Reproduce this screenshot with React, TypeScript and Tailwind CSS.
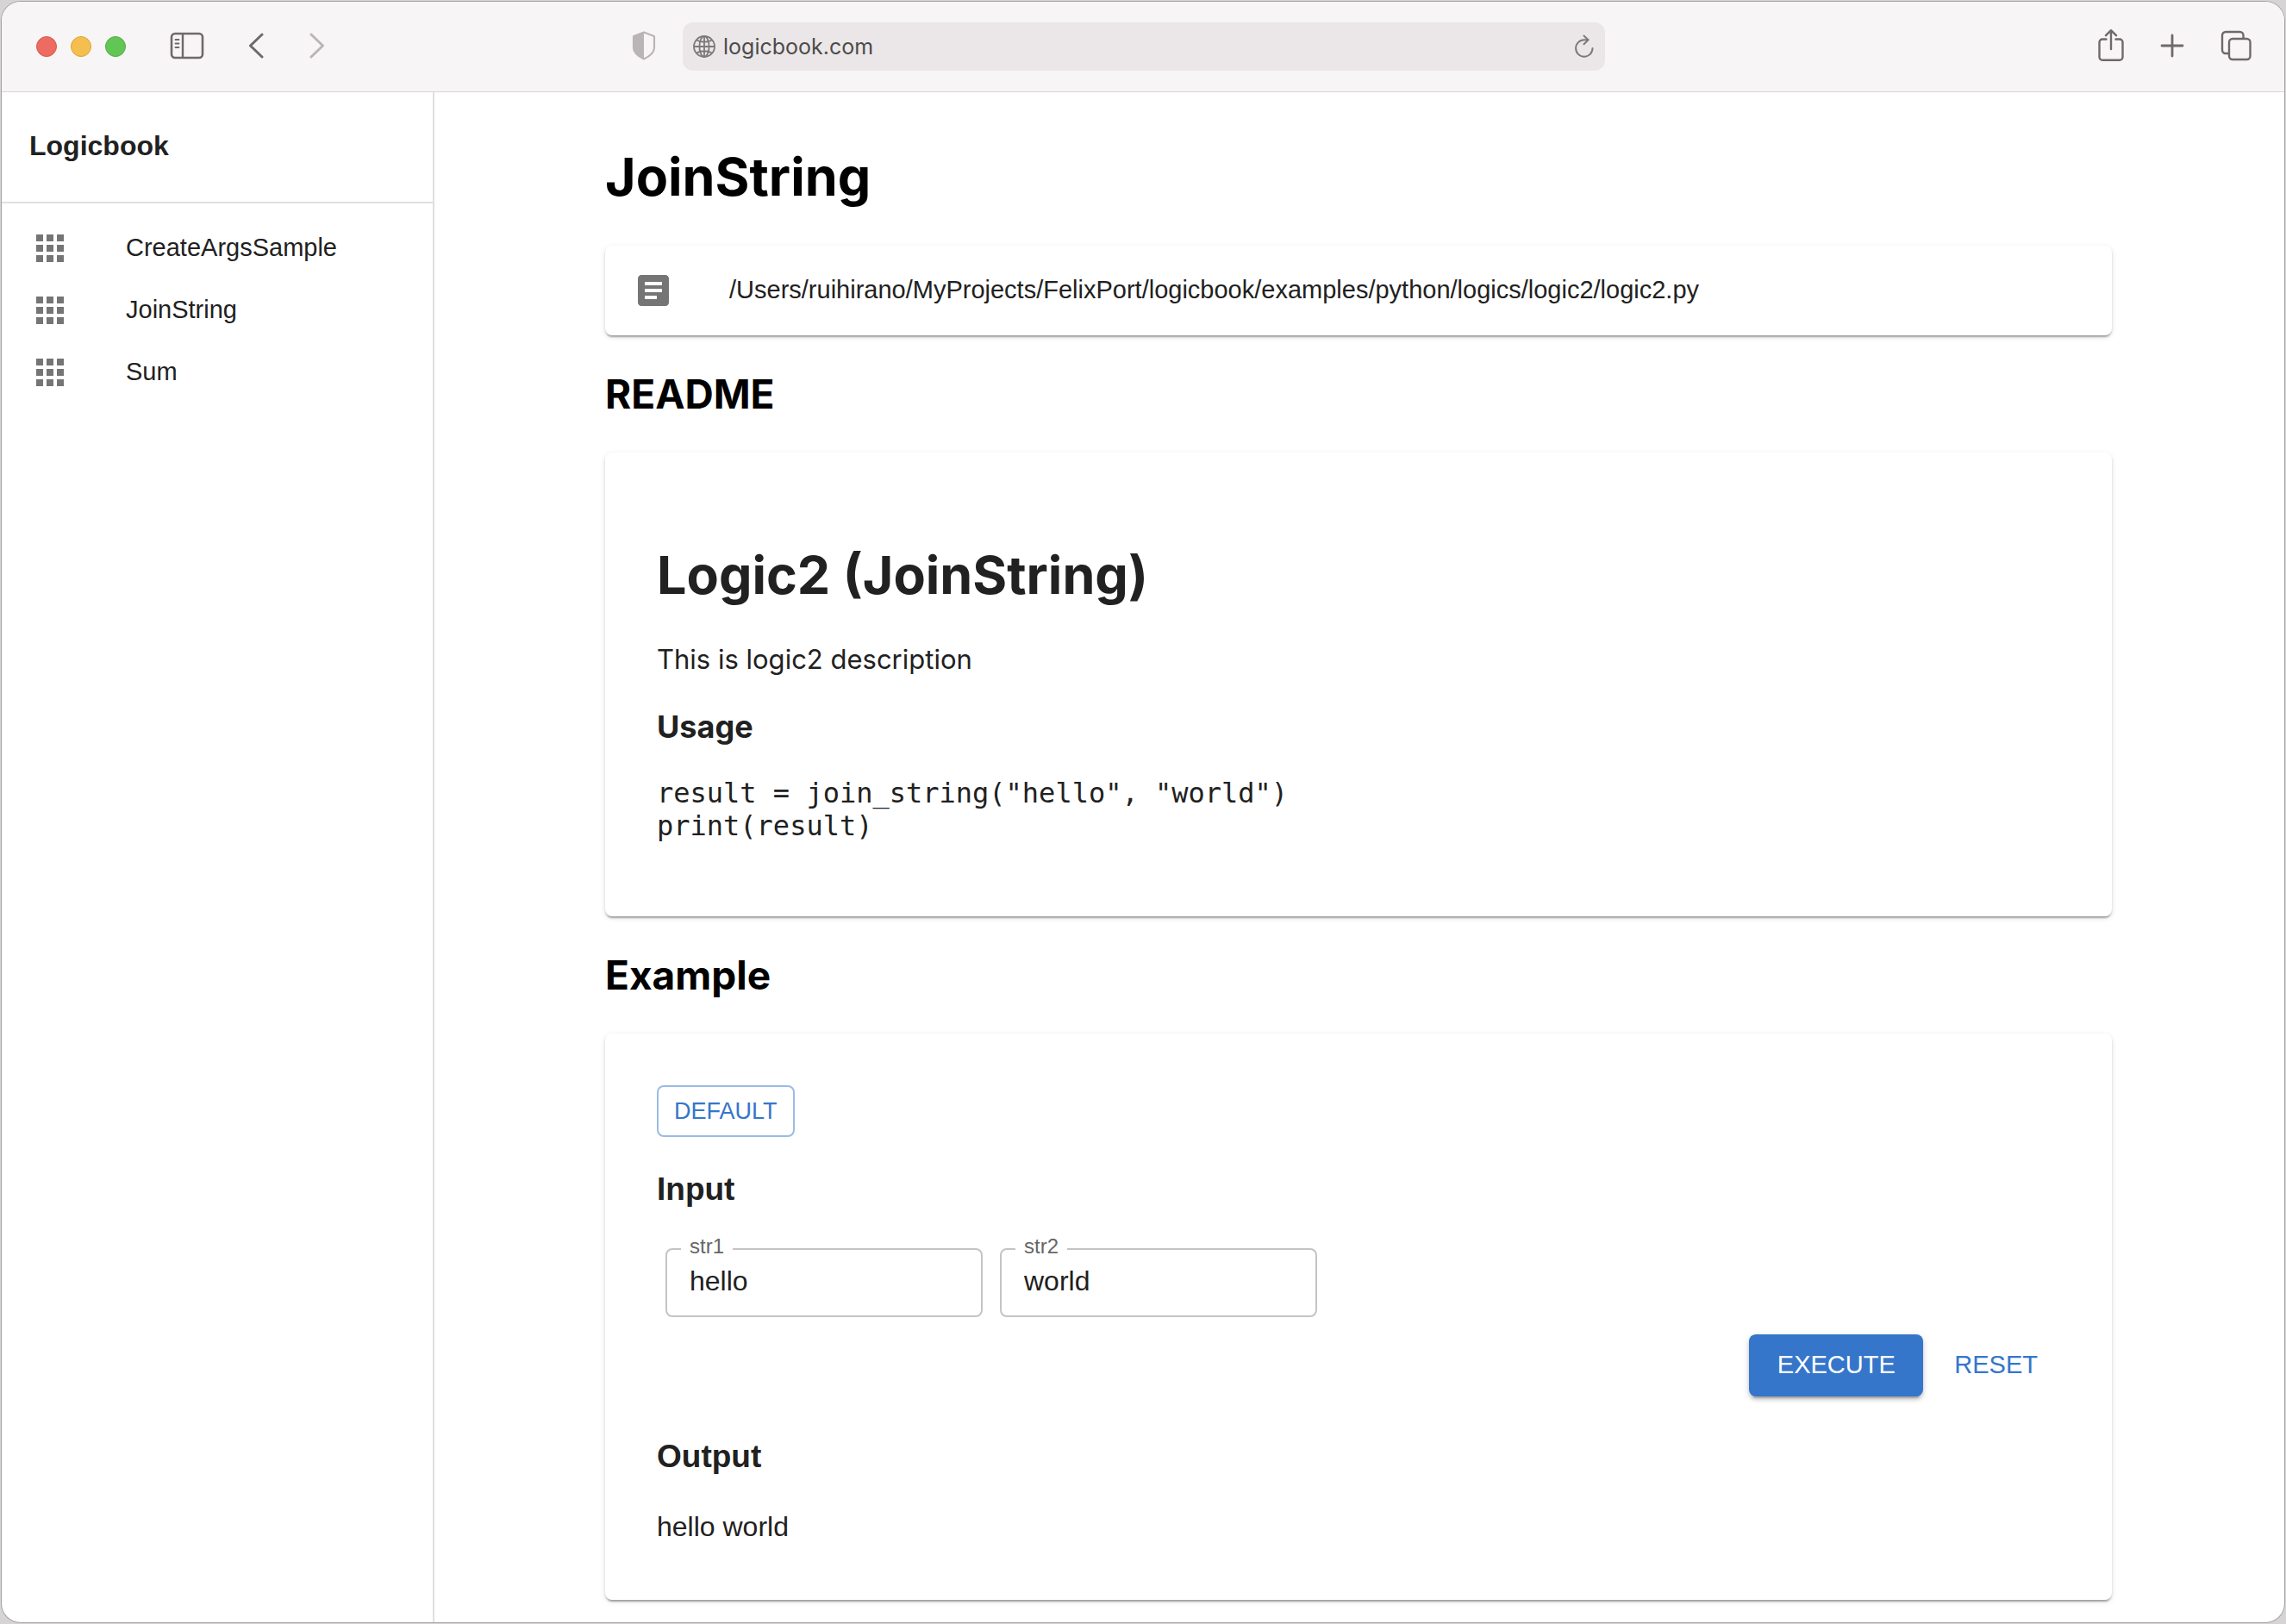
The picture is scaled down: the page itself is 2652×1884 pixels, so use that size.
import React, { useState } from "react";

const SANS = "font-['Liberation_Sans',Arial,sans-serif]";
const UI = "font-['Inter','Liberation_Sans',sans-serif]";

function SidebarIcon() {
  return (
    <svg width="40" height="32" viewBox="0 0 40 32" fill="none" stroke="#6e696a" aria-hidden="true">
      <rect x="2" y="2" width="36" height="28" rx="4" strokeWidth="2.6" />
      <path d="M15 2v28" strokeWidth="2.4" />
      <path d="M6.500 9h4M6.500 13.500h4M6.500 18h4" strokeWidth="1.800" strokeLinecap="round" />
    </svg>
  );
}

function Chevron({ right = false }: { right?: boolean }) {
  return (
    <svg width="18" height="30" viewBox="0 0 18 30" fill="none" stroke={right ? "#bab6b7" : "#6e696a"} strokeWidth="3" strokeLinecap="round" strokeLinejoin="round" aria-hidden="true">
      <path d={right ? "M2 2l13.500 13L2 28" : "M16 2L2.500 15L16 28"} />
    </svg>
  );
}

function ShieldIcon() {
  return (
    <svg width="28" height="34" viewBox="0 0 28 34" aria-hidden="true">
      <path d="M14 1.500L26 6v13.500c0 6-6 10-12 13c-6-3-12-7-12-13V6z" fill="none" stroke="#b9b5b6" strokeWidth="2.200" strokeLinejoin="round" />
      <path d="M14 1.500L2 6v13.500c0 6 6 10 12 13z" fill="#b9b5b6" />
    </svg>
  );
}

function GlobeIcon() {
  return (
    <svg width="26" height="26" viewBox="0 0 26 26" fill="none" stroke="#7d797a" strokeWidth="1.800" aria-hidden="true">
      <circle cx="13" cy="13" r="12" />
      <ellipse cx="13" cy="13" rx="5.600" ry="12" />
      <path d="M13 1v24M1 13h24M4 5.500c5 3 13 3 18 0M4 20.500c5-3 13-3 18 0" />
    </svg>
  );
}

function ReloadIcon() {
  return (
    <svg width="24" height="28" viewBox="0 0 24 28" fill="none" stroke="#7d797a" strokeWidth="2" strokeLinecap="round" strokeLinejoin="round" aria-hidden="true">
      <path d="M21.500 16a9.700 9.700 0 1 1-9.700-9.700h4.700" />
      <path d="M11.500 1.500l5 4.800l-5 5" />
    </svg>
  );
}

function ShareIcon() {
  return (
    <svg width="30" height="38" viewBox="0 0 30 38" fill="none" stroke="#6e696a" strokeWidth="2.400" strokeLinecap="round" strokeLinejoin="round" aria-hidden="true">
      <path d="M9.500 11.500H5a3.500 3.500 0 0 0-3.500 3.500v17.300a3.500 3.500 0 0 0 3.500 3.500h20a3.500 3.500 0 0 0 3.500-3.500V15a3.500 3.500 0 0 0-3.500-3.500h-4.500" />
      <path d="M15 23V1.200M9 7.200l6-6l6 6" />
    </svg>
  );
}

function PlusIcon() {
  return (
    <svg width="28" height="28" viewBox="0 0 28 28" fill="none" stroke="#6e696a" strokeWidth="2.800" strokeLinecap="round" aria-hidden="true">
      <path d="M14 2v24M2 14h24" />
    </svg>
  );
}

function TabsIcon() {
  return (
    <svg width="36" height="36" viewBox="0 0 36 36" fill="none" stroke="#6e696a" strokeWidth="2.400" strokeLinejoin="round" aria-hidden="true">
      <rect x="10" y="10" width="24.500" height="24" rx="4" />
      <path d="M10 27H6a4 4 0 0 1-4-4V6a4 4 0 0 1 4-4h16.500a4 4 0 0 1 4 4v4" />
    </svg>
  );
}

function AppsIcon() {
  return (
    <svg width="48" height="48" viewBox="0 0 24 24" fill="#757575" aria-hidden="true">
      <path d="M4 8h4V4H4v4zm6 12h4v-4h-4v4zm-6 0h4v-4H4v4zm0-6h4v-4H4v4zm6 0h4v-4h-4v4zm6-10v4h4V4h-4zm-6 4h4V4h-4v4zm6 6h4v-4h-4v4zm0 6h4v-4h-4v4z" />
    </svg>
  );
}

function ArticleIcon() {
  return (
    <svg width="48" height="48" viewBox="0 0 24 24" fill="#757575" aria-hidden="true">
      <path d="M19 3H5c-1.100 0-2 .9-2 2v14c0 1.100.9 2 2 2h14c1.100 0 2-.9 2-2V5c0-1.100-.9-2-2-2zm-5 14H7v-2h7v2zm3-4H7v-2h10v2zm0-4H7V7h10v2z" />
    </svg>
  );
}

function Card({ className, children }: { className: string; children: React.ReactNode }) {
  return (
    <div className={`rounded-lg bg-white shadow-[0_4px_2px_-2px_rgba(0,0,0,0.2),0_2px_2px_0_rgba(0,0,0,0.14),0_2px_6px_0_rgba(0,0,0,0.12)] ${className}`}>
      {children}
    </div>
  );
}

function Field({ id, value, onChange }: { id: string; value: string; onChange: (v: string) => void }) {
  return (
    <div className="relative w-[368px]">
      <label htmlFor={id} className="absolute -top-4 left-[18px] bg-white px-[10px] text-[24px] leading-[28px] text-[#666666]">
        {id}
      </label>
      <input
        id={id}
        value={value}
        onChange={(e) => onChange(e.target.value)}
        className="h-20 w-full rounded-lg border-2 border-[#c4c4c4] bg-transparent px-[26px] pb-1 text-[32px] text-[#212121] outline-none"
      />
    </div>
  );
}

const logics = ["CreateArgsSample", "JoinString", "Sum"];

export default function App() {
  const [str1, setStr1] = useState("hello");
  const [str2, setStr2] = useState("world");
  const [output, setOutput] = useState("hello world");

  return (
    <div className="flex min-h-screen bg-[#d6d4d4] p-[2px]">
      <div className="flex flex-1 flex-col overflow-hidden rounded-[22px] bg-white shadow-[0_0_0_1px_#a5a3a3]">
        <header className="flex h-[105px] shrink-0 items-center border-b border-[#d8d5d6] bg-[#f8f5f6] px-[38px]">
          <div className="flex flex-1 items-center pb-[2px] pl-[2px]">
            <div className="flex gap-4 pt-[2px]">
              <button aria-label="Close" className="size-6 rounded-full border border-[#d9564b] bg-[#ed6b60]" />
              <button aria-label="Minimize" className="size-6 rounded-full border border-[#dba23c] bg-[#f5bf4f]" />
              <button aria-label="Zoom" className="size-6 rounded-full border border-[#50ab44] bg-[#62c655]" />
            </div>
            <button aria-label="Show sidebar" className="ml-[51px]"><SidebarIcon /></button>
            <button aria-label="Back" className="ml-[51px]"><Chevron /></button>
            <button aria-label="Forward" className="ml-[53px]"><Chevron right /></button>
            <button aria-label="Privacy report" className="mr-[31px] ml-auto"><ShieldIcon /></button>
          </div>
          <div className="flex h-14 w-[1070px] items-center rounded-xl bg-[#ebe7e8] px-3">
            <GlobeIcon />
            <input
              aria-label="Address"
              defaultValue="logicbook.com"
              className={`ml-[9px] flex-1 bg-transparent pt-[2px] text-[25px] text-[#4d4b4b] outline-none ${UI}`}
            />
            <button aria-label="Reload"><ReloadIcon /></button>
          </div>
          <div className="flex flex-1 items-center justify-end gap-[42px] pb-[2px]">
            <button aria-label="Share"><ShareIcon /></button>
            <button aria-label="New tab"><PlusIcon /></button>
            <button aria-label="Tab overview"><TabsIcon /></button>
          </div>
        </header>

        <div className={`flex flex-1 ${SANS}`}>
          <aside className="w-[502px] shrink-0 border-r-2 border-[#e0e0e0]">
            <div className="flex h-[129px] items-center border-b-2 border-[#e0e0e0] px-8 pb-1 text-[32px] font-bold text-[#212121]">
              Logicbook
            </div>
            <nav className="pt-4">
              {logics.map((name) => (
                <a key={name} href={`#${name}`} className="flex h-[72px] items-center gap-16 px-8 text-[29px] text-[#212121]">
                  <AppsIcon />
                  {name}
                </a>
              ))}
            </nav>
          </aside>

          <main className={`min-w-0 flex-1 pt-[60px] pr-[200px] pb-6 pl-[198px] ${UI}`}>
            <h1 className="text-[61px] leading-[76px] font-bold text-black">JoinString</h1>
            <Card className="mt-[42px] flex h-[104px] items-center gap-16 px-8">
              <ArticleIcon />
              <span className={`text-[29px] text-[#212121] ${SANS}`}>
                /Users/ruihirano/MyProjects/FelixPort/logicbook/examples/python/logics/logic2/logic2.py
              </span>
            </Card>

            <h2 className="mt-10 text-[46px] leading-[56px] font-bold text-black">README</h2>
            <Card className="mt-10 px-[60px] pt-[104px] pb-[86px] text-[#212121]">
              <h1 className="text-[61px] leading-[76px] font-bold">Logic2 (JoinString)</h1>
              <p className="mt-[41px] text-[31px] leading-[38px]">This is logic2 description</p>
              <h3 className="mt-[37px] text-[36px] leading-[44px] font-bold">Usage</h3>
              <pre className="mt-[36px] font-['DejaVu_Sans_Mono',monospace] text-[32px] leading-[38px]">
                {'result = join_string("hello", "world")\nprint(result)'}
              </pre>
            </Card>

            <h2 className="mt-10 text-[46px] leading-[56px] font-bold text-black">Example</h2>
            <Card className={`mt-10 px-[60px] pt-[60px] pb-[66px] text-[#212121] ${SANS}`}>
              <button className="h-[60px] rounded-lg border-2 border-[#9bbbe5] px-[18px] text-[27px] text-[#3576cb]">DEFAULT</button>
              <h3 className="mt-[39px] text-[37px] leading-[44px] font-bold">Input</h3>
              <div className="mt-[46px] ml-[10px] flex gap-5">
                <Field id="str1" value={str1} onChange={setStr1} />
                <Field id="str2" value={str2} onChange={setStr2} />
              </div>
              <div className="mt-5 flex justify-end gap-5 pr-[10px]">
                <button
                  onClick={() => setOutput(`${str1} ${str2}`)}
                  className="h-[72px] w-[202px] rounded-lg bg-[#3576cb] text-[29px] text-white shadow-[0_6px_2px_-4px_rgba(0,0,0,0.2),0_4px_4px_0_rgba(0,0,0,0.14),0_2px_10px_0_rgba(0,0,0,0.12)]"
                >
                  EXECUTE
                </button>
                <button
                  onClick={() => {
                    setStr1("hello");
                    setStr2("world");
                  }}
                  className="h-[72px] px-4 text-[29px] text-[#3576cb]"
                >
                  RESET
                </button>
              </div>
              <h3 className="mt-12 text-[37px] leading-[44px] font-bold">Output</h3>
              <p className="mt-10 text-[32px] leading-[38px]">{output}</p>
            </Card>
          </main>
        </div>
      </div>
    </div>
  );
}
